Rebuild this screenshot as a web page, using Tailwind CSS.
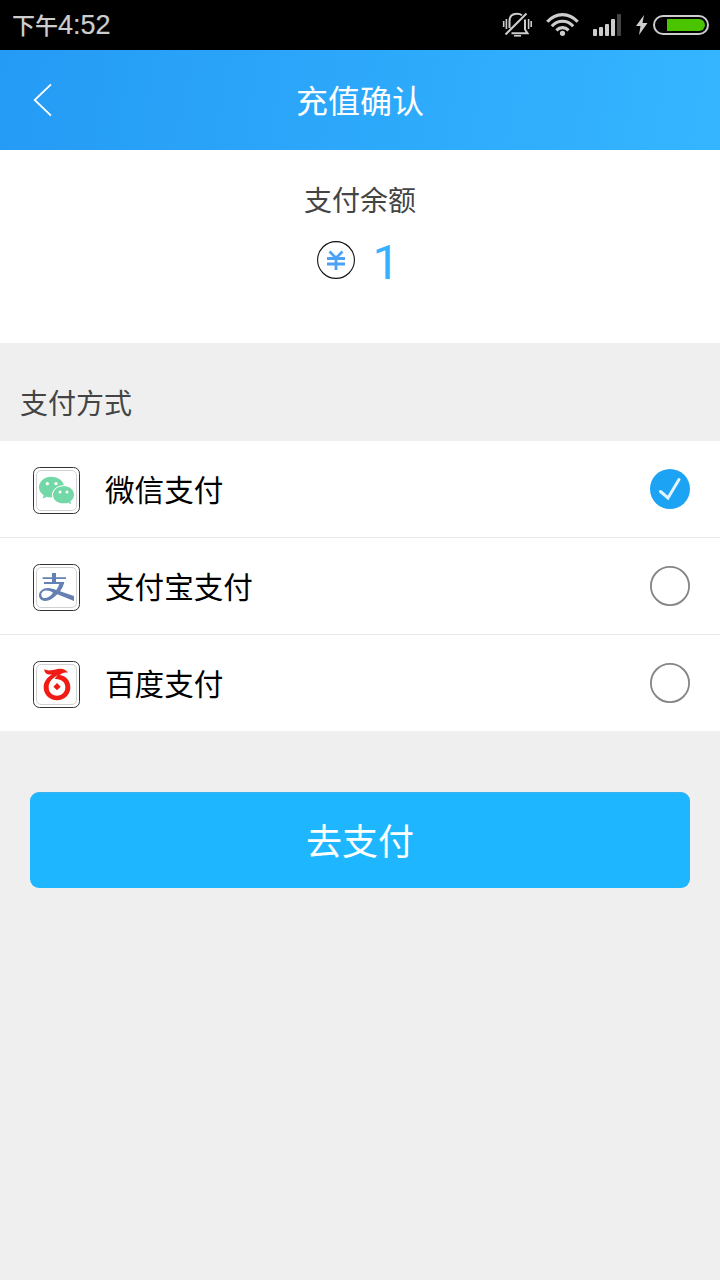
<!DOCTYPE html>
<html lang="zh-CN">
<head>
<meta charset="utf-8">
<title>充值确认</title>
<script src="https://cdn.jsdelivr.net/npm/@tailwindcss/browser@4"></script>
</head>
<body class="flex h-[1280px] w-[720px] flex-col overflow-hidden bg-[#efefef] font-['Roboto','Noto_Sans_CJK_SC',sans-serif]">
<div class="flex h-[50px] shrink-0 items-center justify-between bg-black pl-3 text-[#cdcdcd]">
  <div class="flex items-center leading-[50px]"><span class="pt-[3px] text-[23px] font-medium">下午</span><span class="font-['Liberation_Sans'] text-[27px] [-webkit-text-stroke:0.2px_#cdcdcd]">4:52</span></div>
  <svg class="h-[50px] w-[230px]" viewBox="490 0 230 50" fill="none" stroke="#cdcdcd">
    <g stroke-width="1.6">
      <path d="M503.7 21v6M506.4 19v10M528.6 19v10M531.2 21v6"/>
      <path stroke-width="2" d="M509.5 28V21C509.5 16 512.5 13.8 517 13.8 519 13.8 520.7 14.3 522 15.3M525 19.5V29.5L527.500 33.3H511.5M505.5 34.5 526.500 13.500"/>
      <path d="M514 35.800H521"/>
    </g>
    <g stroke-width="3.1">
      <path d="M547.3 21.8C556 12.2 569 12.2 577.7 21.8"/>
      <path d="M551.8 26.2C558 19.6 567 19.6 573.2 26.2"/>
      <path d="M556.4 30.4C560 26.7 565 26.7 568.6 30.4"/>
    </g>
    <circle cx="562.5" cy="33.3" r="2.6" fill="#cdcdcd" stroke="none"/>
    <g fill="#cdcdcd" stroke="none">
      <rect x="593" y="29" width="4" height="7" rx="1"/>
      <rect x="599" y="27" width="4" height="9" rx="1"/>
      <rect x="605" y="24" width="4" height="12" rx="1"/>
      <rect x="611" y="19" width="4" height="17" rx="1"/>
      <rect x="617" y="14" width="4" height="22" rx="1" fill="#444"/>
      <path d="M644 15 636 26H640.5L639 35 647.5 23H642.5Z"/>
    </g>
    <rect x="654" y="16" width="54" height="18" rx="9" stroke-width="2"/>
    <path d="M667 19H699A6 6 0 0 1 699 31H667Z" fill="#4bc400" stroke="none"/>
  </svg>
</div>
<header class="grid h-[100px] shrink-0 grid-cols-[100px_1fr_100px] items-center bg-[linear-gradient(100deg,#249bf5,#35b5ff)] text-white">
  <svg class="h-[100px] w-[100px]" viewBox="0 0 100 100" fill="none" stroke="white" stroke-width="1.8"><path d="M51 34.3 34.7 50 51 65.6"/></svg>
  <h1 class="pt-1 text-center text-[32px] leading-[96px]">充值确认</h1>
</header>
<section class="flex h-[193px] shrink-0 flex-col items-center bg-white pt-[31px]">
  <h2 class="text-[28px] leading-[42px] text-[#444]">支付余额</h2>
  <div class="mt-[12px] mr-[5px] flex h-[50px] items-center gap-[17px]">
    <svg class="h-10 w-10" viewBox="0 0 40 40" fill="none"><circle cx="20" cy="20" r="18.4" stroke="#111" stroke-width="1.1"/><path d="M13.500 11.500 20 18 26.500 11.500M11 18.500H29M11 24H29M20 18V30" stroke="#4da2f8" stroke-width="2.800"/></svg>
    <span class="pt-[6px] text-[48px] leading-[50px] text-[#35b1ff]">1</span>
  </div>
</section>
<h2 class="h-[98px] shrink-0 pt-[41px] pl-5 text-[28px] leading-[42px] text-[#444]">支付方式</h2>
<ul class="flex h-[290px] shrink-0 flex-col bg-white text-[29.6px] text-black">
  <li class="flex h-[97px] shrink-0 items-center border-b border-[#eaeaea] pr-[29px] pl-[33px]">
    <svg class="mt-[3px] h-[47px] w-[47px]" viewBox="0 0 141 141" fill="none">
      <rect x="1.5" y="1.5" width="138" height="138" rx="18" stroke="#333" stroke-width="3"/><rect x="10.500" y="10.500" width="120" height="120" rx="14" stroke="#d0d0d0" stroke-width="3"/>
      <path fill="#72d8a7" d="M55 29C34 29 18 43 18 61 18 71 23 79 32 85L29 95 41 89C46 91 53 92 59 91 54 71 70 56 93 56 90 40 74 29 55 29Z"/>
      <path fill="#72d8a7" d="M91 57C73 57 60 68 60 83 60 98 73 109 92 109 97 109 102 108 106 107L114 112 112 103C119 98 123 91 123 83 123 68 109 57 91 57Z"/>
      <path stroke="white" stroke-width="3" d="M59 92C54 72 70 56 93 56"/>
      <g fill="white"><circle cx="43" cy="50" r="5"/><circle cx="69" cy="50" r="5"/><circle cx="81" cy="75" r="4.500"/><circle cx="102" cy="75" r="4.500"/></g>
    </svg>
    <span class="ml-[25px] flex-1 pt-1">微信支付</span>
    <svg class="h-[42px] w-[42px]" viewBox="0 0 42 42" fill="none"><circle cx="21" cy="21" r="20" fill="#1da3f3"/><path d="M11.500 23.500 19 30 30 11.500" stroke="#e4f4ff" stroke-width="3" stroke-linecap="round"/></svg>
  </li>
  <li class="flex h-[97px] shrink-0 items-center border-b border-[#eaeaea] pr-[29px] pl-[33px]">
    <svg class="mt-[3px] h-[47px] w-[47px]" viewBox="0 0 141 141" fill="none">
      <rect x="1.5" y="1.5" width="138" height="138" rx="18" stroke="#333" stroke-width="3"/><rect x="10.500" y="10.500" width="120" height="120" rx="14" stroke="#d0d0d0" stroke-width="3"/>
      <g fill="#6580b2"><path d="M57 27H69V40H99V45H69V56H57V45H29V40H57Z"/><path fill-rule="evenodd" d="M33 54H94C91 66 87 74 81 82L123 96V111L73 91C61 104 48 111 37 111 25 111 18 104 18 94 18 82 30 72 45 72 54 72 62 75 70 78 74 72 77 66 79 60H33ZM60 86C45 75 25 79 25 92 25 106 46 107 60 86Z"/></g>
    </svg>
    <span class="ml-[25px] flex-1 pt-1">支付宝支付</span>
    <svg class="h-[42px] w-[42px]" viewBox="0 0 42 42" fill="none"><circle cx="21" cy="21" r="19.100" stroke="#858585" stroke-width="1.800"/></svg>
  </li>
  <li class="flex h-[96px] shrink-0 items-center pr-[29px] pl-[33px]">
    <svg class="mt-[3px] h-[47px] w-[47px]" viewBox="0 0 141 141" fill="none">
      <rect x="1.5" y="1.5" width="138" height="138" rx="18" stroke="#333" stroke-width="3"/><rect x="10.500" y="10.500" width="120" height="120" rx="14" stroke="#d0d0d0" stroke-width="3"/>
      <path fill="#f01b14" fill-rule="evenodd" d="M34 24C42 31 58 28 74 24 88 21 101 26 105 36 96 33 87 36 80 42 99 44 112 60 112 79 112 101 95 118 72 118 49 118 32 101 32 79 32 63 41 51 57 40 45 43 33 37 34 24ZM75 42C58 51 47 63 47 79 47 94 57 104 72 104 87 104 97 94 97 79 97 64 86 53 65 54 68 49 71 45 75 42Z"/>
      <path fill="#f01b14" d="M72 66 83 77 72 88 61 77Z"/>
    </svg>
    <span class="ml-[25px] flex-1 pt-1">百度支付</span>
    <svg class="h-[42px] w-[42px]" viewBox="0 0 42 42" fill="none"><circle cx="21" cy="21" r="19.100" stroke="#858585" stroke-width="1.800"/></svg>
  </li>
</ul>
<button class="mx-[30px] mt-[61px] h-[96px] shrink-0 rounded-[9px] border-t border-[#3bb0f0] bg-[#1eb6ff] pt-[5px] text-[36px] text-white">去支付</button>
</body>
</html>
